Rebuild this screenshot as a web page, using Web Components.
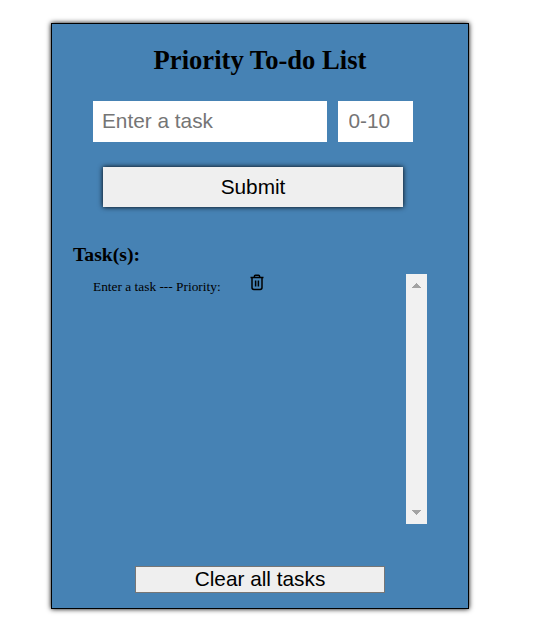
<!DOCTYPE html>
<html lang="en">
<head>
<meta charset="utf-8">
<title>Priority To-do List</title>
<style>
body { margin: 0; box-sizing: border-box; min-height: 637px; padding: 23px 0 0 51px; background: #fff; font-family: "Liberation Serif", "Times New Roman", serif; color: #000; }
</style>
</head>
<body>
<todo-panel>
  <todo-form slot="form"></todo-form>
  <task-list slot="list"><task-item>Enter a task --- Priority:</task-item></task-list>
  <clear-button slot="footer">Clear all tasks</clear-button>
</todo-panel>
<script>
function define(name, html) {
  customElements.define(name, class extends HTMLElement {
    constructor() {
      super();
      this.attachShadow({ mode: 'open' }).innerHTML = html;
    }
  });
}

define('todo-panel', `
<style>
:host { display: flex; flex-direction: column; box-sizing: border-box; width: 418px; height: 586px;
  background: steelblue; border: 1px solid #000; box-shadow: 0 0 5px #000; }
h1 { margin: 20px 0 0; font-size: 26.6px; line-height: 32px; text-align: center; font-weight: bold; }
h2 { margin: 35px 0 0 21px; font-size: 19.7px; line-height: 24px; font-weight: bold; }
slot { display: block; }
slot[name=form] { margin-top: 25px; }
slot[name=list] { margin-top: 8px; }
slot[name=footer] { margin-top: 42px; }
</style>
<h1>Priority To-do List</h1>
<slot name="form"></slot>
<h2>Task(s):</h2>
<slot name="list"></slot>
<slot name="footer"></slot>`);

define('todo-form', `
<style>
:host { display: block; }
.row { display: flex; gap: 11px; margin-left: 41px; }
input { box-sizing: border-box; height: 41px; margin: 0; border: 0; border-radius: 0; background: #fff;
  font: 20.8px "Liberation Sans", Arial, sans-serif; outline: 0; }
input::placeholder { color: #757575; opacity: 1; }
.task { width: 234px; padding: 0 9px 2px; }
.priority { width: 75px; padding: 0 10.5px 2px; }
button { display: block; box-sizing: border-box; width: 300px; height: 40px; margin: 25px 0 0 51px; padding: 0;
  border: 0; background: #efefef; color: #000; font: 20.8px "Liberation Sans", Arial, sans-serif; box-shadow: 0 0 5px #000; }
</style>
<div class="row"><input class="task" placeholder="Enter a task"><input class="priority" placeholder="0-10"></div>
<button>Submit</button>`);

define('task-list', `
<style>
:host { display: flex; justify-content: space-between; height: 250px; margin: 0 41px 0 41px; }
.bar { display: flex; flex-direction: column; justify-content: space-between; width: 21px; background: #f1f1f1; }
svg { display: block; width: 21px; height: 23px; }
</style>
<div><slot></slot></div>
<div class="bar">
  <svg viewBox="0 0 21 23" fill="#a3a3a3" shape-rendering="crispEdges"><path d="M10 9h1v1h1v1h1v1h1v1h1v1H6v-1h1v-1h1v-1h1v-1h1z"/></svg>
  <svg viewBox="0 0 21 23" fill="#a3a3a3" shape-rendering="crispEdges"><path d="M10 14h1v-1h1v-1h1v-1h1v-1h1V9H6v1h1v1h1v1h1v1h1z"/></svg>
</div>`);

define('task-item', `
<style>
:host { display: flex; align-items: flex-start; gap: 29.5px; font-size: 13.36px; line-height: 16px; white-space: nowrap; }
span { padding-top: 5px; }
svg { display: block; width: 14px; height: 17px; }
</style>
<span><slot></slot></span>
<svg viewBox="0 0 14 17" fill="none" stroke="#000" stroke-width="1.5"><path d="M.5 3.4H13.5M4.4 3.3V2.2Q4.4 1.2 5.4 1.2H8.6Q9.6 1.2 9.6 2.2V3.3M2 3.4V13.6Q2 15.5 3.9 15.5H10.1Q12 15.5 12 13.6V3.4"/><path d="M5.6 6.4V12.4M8.4 6.4V12.4"/></svg>`);

define('clear-button', `
<style>
:host { display: block; }
button { display: block; box-sizing: border-box; width: 250px; height: 27px; margin: 0 auto; padding: 0 0 2px;
  border: 1px solid #767676; border-radius: 0; background: #efefef; color: #000; font: 20.8px/23px "Liberation Sans", Arial, sans-serif; }
</style>
<button><slot></slot></button>`);
</script>
</body>
</html>
